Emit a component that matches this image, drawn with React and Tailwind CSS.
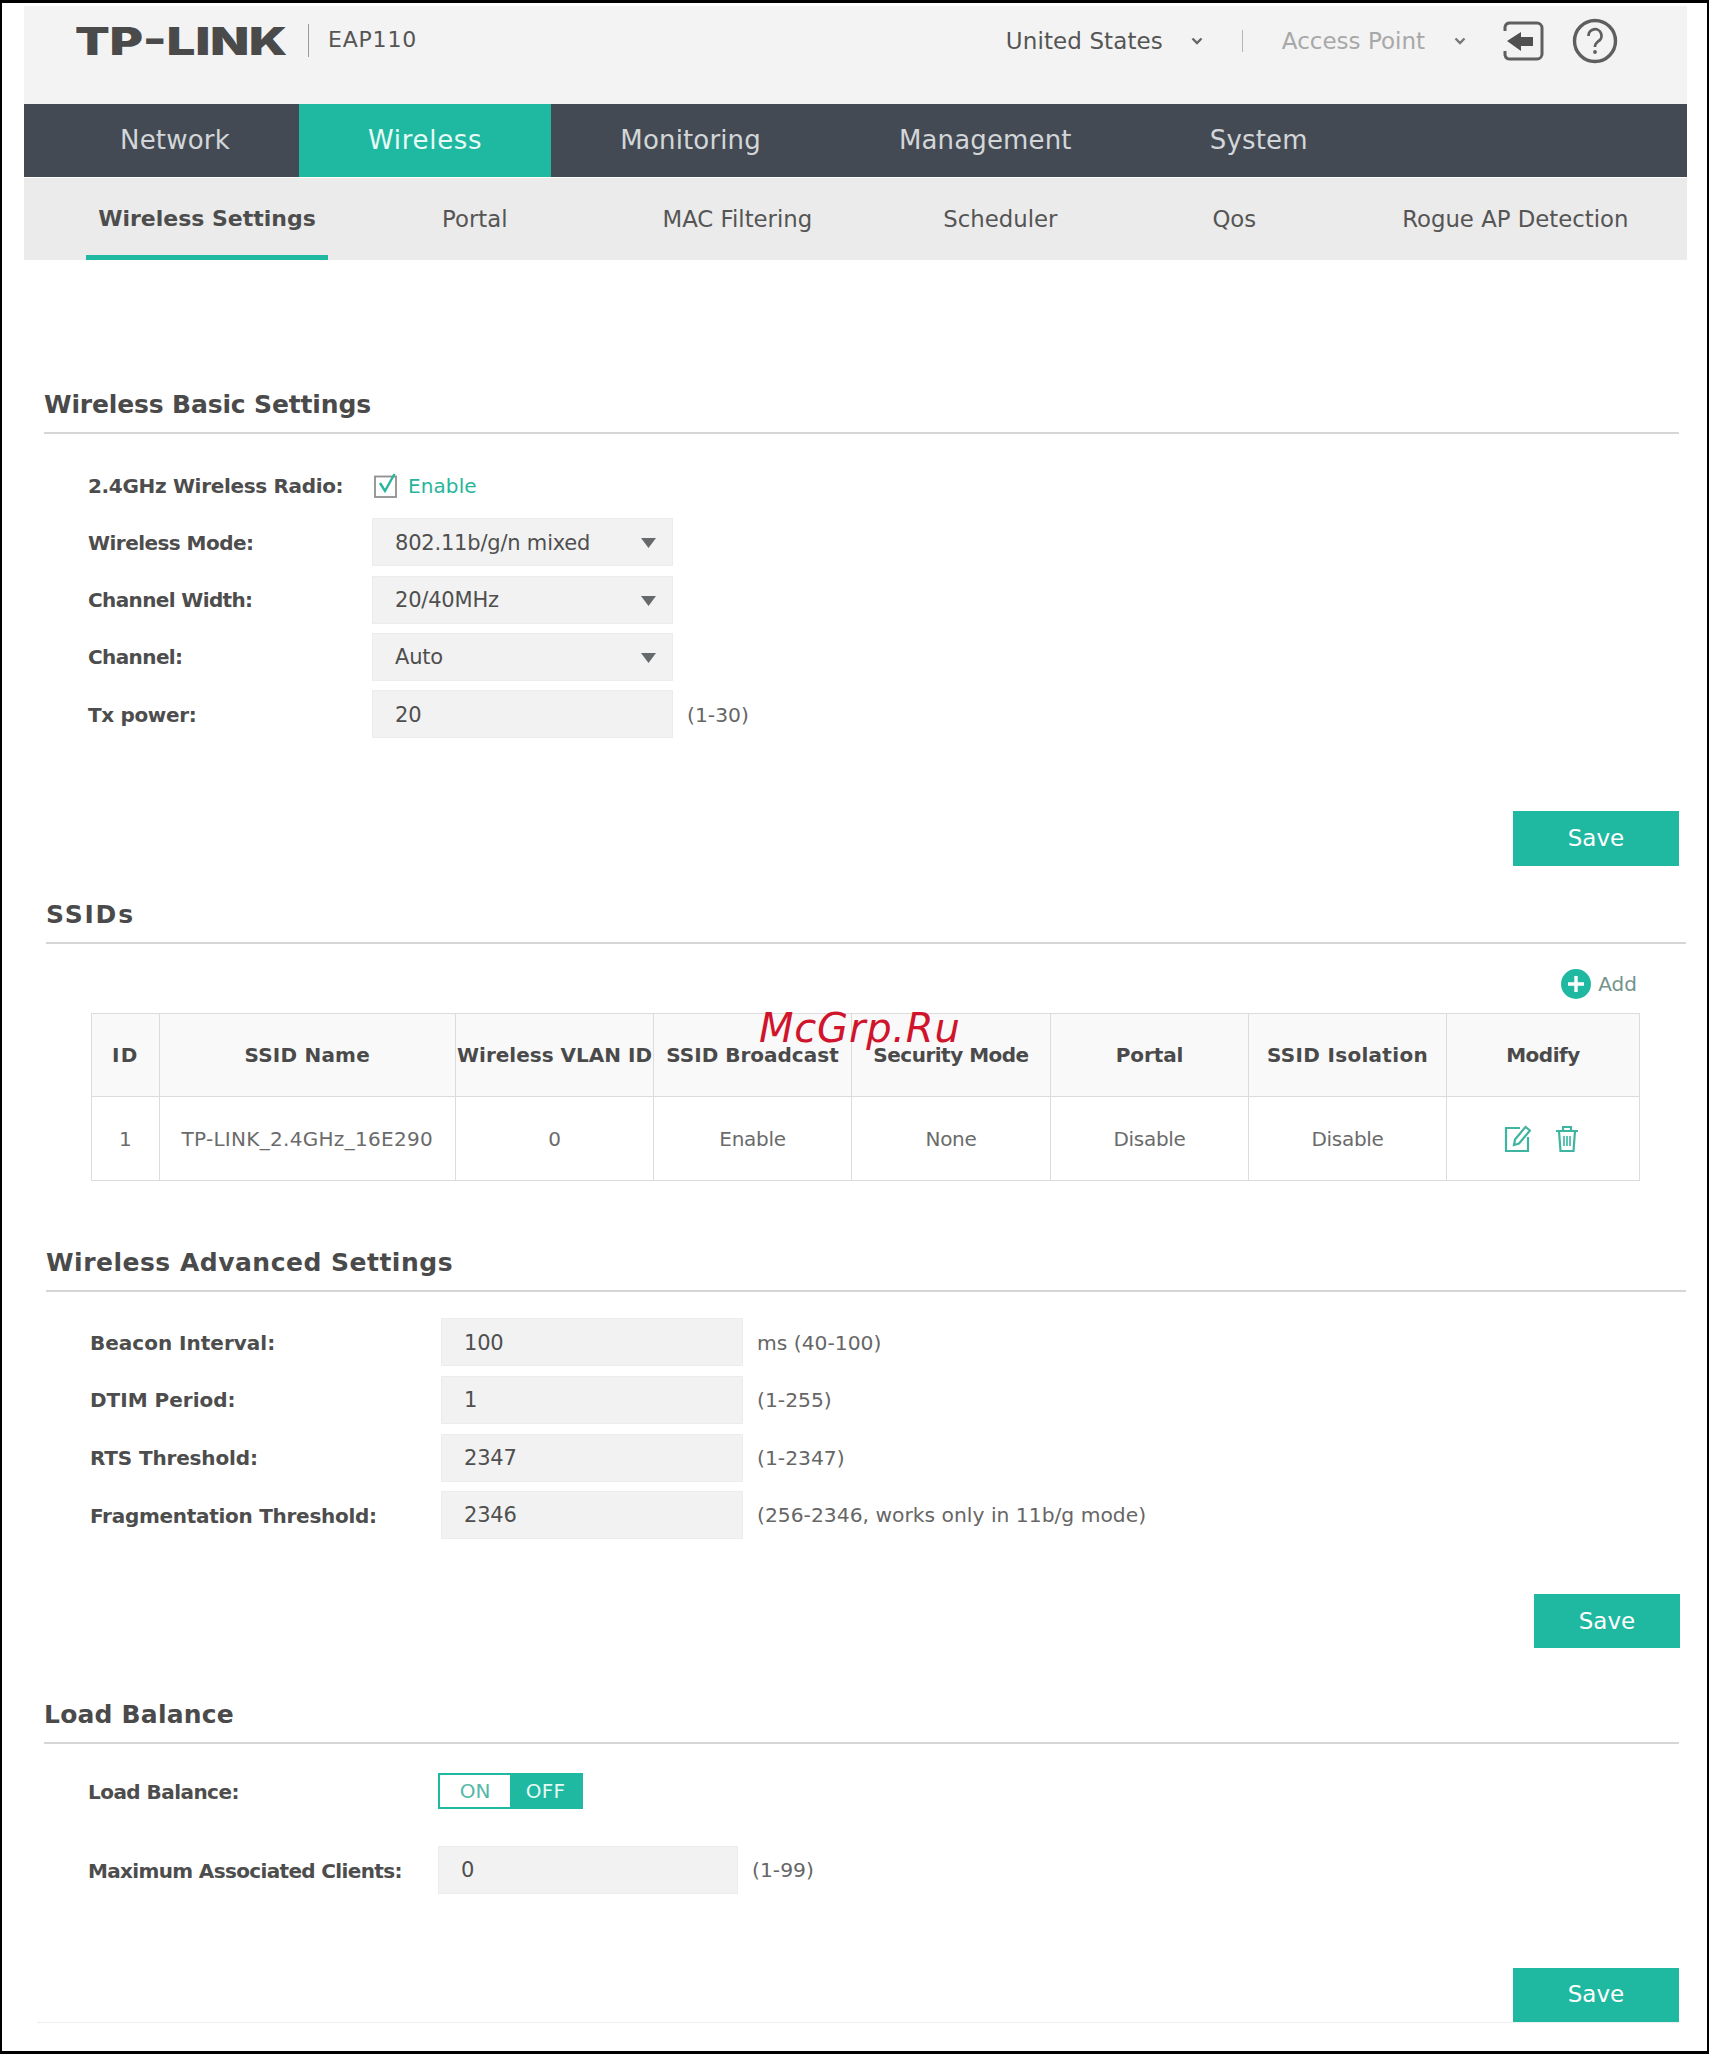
import React from "react";

const Chevron = ({ className }) => (
  <svg className={className} width="12" height="8" viewBox="0 0 12 8" fill="none" stroke="currentColor" strokeWidth="2.4">
    <path d="M1.5 1.5 L6 6 L10.5 1.5" />
  </svg>
);

const Arrow = () => (
  <svg className="absolute right-[16px] top-[19px]" width="15" height="10" viewBox="0 0 15 10">
    <polygon points="0,0 15,0 7.5,10" fill="#666a6d" />
  </svg>
);

const Heading = ({ className, tracking, children }) => (
  <div className={`h-[50px] pb-[8px] border-b-2 border-[#d6d6d6] flex items-center ${className}`}>
    <h2 className={`pt-[1px] text-[25px] leading-[40px] font-bold text-[#4a4a4a] ${tracking}`}>{children}</h2>
  </div>
);

const Field = ({ value, select, className }) => (
  <div className={`relative h-[48px] bg-[#f2f2f2] border border-[#ececec] flex items-center pl-[22px] pt-[2px] text-[21px] text-[#4f4f4f] tracking-[-0.2px] ${className}`}>
    {value}
    {select && <Arrow />}
  </div>
);

const Label = ({ className, children }) => (
  <div className={`pt-[1px] text-[20px] font-bold text-[#4d4d4d] whitespace-nowrap ${className}`}>{children}</div>
);

const Hint = ({ children }) => <div className="ml-[14px] pt-[1px] text-[20.3px] text-[#666666]">{children}</div>;

const SaveButton = ({ className }) => (
  <button className={`flex items-center justify-center bg-[#1fb8a0] text-white text-[23px] ${className}`}>Save</button>
);

const mainNav = [
  { t: "Network", c: "ml-[27px] tracking-[0.2px]" },
  { t: "Wireless", c: "bg-[#1fb8a0] text-[#e6fbf6] tracking-[0.7px]" },
  { t: "Monitoring", c: "tracking-[0.15px]" },
  { t: "Management", c: "tracking-[0.15px]" },
  { t: "System", c: "tracking-[0.2px]" },
];

const subNav = [
  { t: "Portal", c: "ml-[114px]" },
  { t: "MAC Filtering", c: "ml-[155px]" },
  { t: "Scheduler", c: "ml-[131px]" },
  { t: "Qos", c: "ml-[155px]" },
  { t: "Rogue AP Detection", c: "ml-[146px]" },
];

const basic = [
  ["Wireless Mode:", "802.11b/g/n mixed", true, null, "tracking-[-0.55px]"],
  ["Channel Width:", "20/40MHz", true, null, "tracking-[-0.63px]"],
  ["Channel:", "Auto", true, null, "tracking-[-0.6px]"],
  ["Tx power:", "20", false, "(1-30)", "tracking-[-0.35px]"],
];

const advanced = [
  ["Beacon Interval:", "100", "ms (40-100)", "tracking-[0px]"],
  ["DTIM Period:", "1", "(1-255)", "tracking-[0px]"],
  ["RTS Threshold:", "2347", "(1-2347)", "tracking-[-0.15px]"],
  ["Fragmentation Threshold:", "2346", "(256-2346, works only in 11b/g mode)", "tracking-[-0.28px]"],
];

const cols = [
  ["ID", "tracking-[1.2px]"],
  ["SSID Name", "tracking-[0.2px]"],
  ["Wireless VLAN ID", "tracking-[0px]"],
  ["SSID Broadcast", "tracking-[0px]"],
  ["Security Mode", "tracking-[-0.5px]"],
  ["Portal", "tracking-[-0.1px]"],
  ["SSID Isolation", "tracking-[0.3px]"],
  ["Modify", "tracking-[-0.5px]"],
];
const cells = [
  ["1", "tracking-[-0.3px]"],
  ["TP-LINK_2.4GHz_16E290", "tracking-[0.3px]"],
  ["0", "tracking-[-0.3px]"],
  ["Enable", "tracking-[-0.3px]"],
  ["None", "tracking-[-0.3px]"],
  ["Disable", "tracking-[-0.3px]"],
  ["Disable", "tracking-[-0.3px]"],
];
const gridCols = "grid grid-cols-[67.5px_296.5px_198px_198px_199px_198px_198px_193px]";

export default function App() {
  return (
    <div className="relative w-[1709px] h-[2054px] overflow-hidden bg-white border-x-2 border-y-[3px] border-black pt-[3px] font-['DejaVu_Sans',sans-serif]">
      {/* header */}
      <div className="ml-[22px] mr-[20px]">
        <header className="h-[98px] bg-[#f3f3f3] flex items-start relative">
          <div className="ml-[51px] mt-[15px] w-[211px] h-[40px] flex items-center whitespace-nowrap origin-left scale-x-[1.33] text-[38px] font-black text-[#4a4a4a] font-['Inter',sans-serif]">TP-LINK</div>
          <div className="ml-[22px] mt-[18px] h-[33px] w-px bg-[#9a9a9a]" />
          <div className="ml-[19px] mt-[20px] text-[22px] leading-[28px] text-[#555555] tracking-[0.8px]">EAP110</div>
          <div className="ml-auto flex items-center h-[70px] mt-0">
            <span className="text-[23px] text-[#555555] tracking-[0.1px]">United States</span>
            <Chevron className="ml-[28px] text-[#666666]" />
            <div className="ml-[39px] h-[22px] w-px bg-[#b5b5b5]" />
            <span className="ml-[39px] text-[23px] text-[#a8a8a8]">Access Point</span>
            <Chevron className="ml-[29px] text-[#777777]" />
            <svg className="ml-[36px]" width="42" height="42" viewBox="0 0 42 42" fill="none">
              <path d="M3 11 V7 A5 5 0 0 1 8 3 H35 A5 5 0 0 1 40 8 V34 A5 5 0 0 1 35 39 H8 A5 5 0 0 1 3 35 V31" stroke="#5f5f5f" strokeWidth="3" />
              <polygon points="5,21 19,12 19,17 31,17 31,26 19,26 19,31" fill="#505050" />
            </svg>
            <svg className="ml-[28px] mr-[69px]" width="46" height="46" viewBox="0 0 46 46" fill="none">
              <circle cx="23" cy="23" r="20.5" stroke="#5f5f5f" strokeWidth="3.4" />
              <path d="M16.5 18 A6.5 6.5 0 1 1 26 23.5 C24 25 23 26 23 29" stroke="#5f5f5f" strokeWidth="2.8" />
              <circle cx="23" cy="34" r="1.9" fill="#5f5f5f" />
            </svg>
          </div>
        </header>

        <nav className="h-[73px] bg-[#434a54] flex text-[26px] text-[#d3d6d8]">
          {mainNav.map((n) => (
            <div key={n.t} className={`h-full flex items-center px-[69px] ${n.c}`}>{n.t}</div>
          ))}
        </nav>

        <div className="mt-px h-[82px] bg-[#ebebeb] flex text-[22.8px] text-[#555555] items-start">
          <div className="ml-[62px] h-[82px] w-[242px] border-b-[5px] border-[#1fb8a0] flex items-center justify-center text-[22px] font-bold text-[#4d4d4d] pt-[3px]">Wireless Settings</div>
          {subNav.map((s) => (
            <div key={s.t} className={`h-[82px] pt-[1px] flex items-center ${s.c}`}>{s.t}</div>
          ))}
        </div>
      </div>

      {/* Wireless Basic Settings */}
      <Heading className="ml-[42px] mr-[28px] mt-[124px]" tracking="tracking-[-0.15px]">Wireless Basic Settings</Heading>
      <div className="ml-[86px] mt-[27px] flex flex-col gap-[9.33px]">
        <div className="h-[48px] flex items-center">
          <Label className="w-[284px] tracking-[-0.33px]">2.4GHz Wireless Radio:</Label>
          <svg className="ml-[2px]" width="25" height="25" viewBox="0 0 25 25" fill="none">
            <rect x="1" y="3.5" width="21" height="20.5" stroke="#8f8f8f" strokeWidth="1.8" />
            <path d="M6 10 L11 18 L20.5 1" stroke="#27b69c" strokeWidth="2.4" />
          </svg>
          <span className="ml-[9px] pt-[1px] text-[20px] tracking-[0.1px] text-[#27b69c]">Enable</span>
        </div>
        {basic.map(([l, v, sel, hint, tr]) => (
          <div key={l} className="h-[48px] flex items-center">
            <Label className={`w-[284px] ${tr}`}>{l}</Label>
            <Field value={v} select={sel} className="w-[301px]" />
            {hint && <Hint>{hint}</Hint>}
          </div>
        ))}
      </div>
      <div className="mt-[73px] flex justify-end mr-[28px]">
        <SaveButton className="w-[166px] h-[55px] pb-[2px]" />
      </div>

      {/* SSIDs */}
      <Heading className="ml-[44px] mr-[21px] mt-[28px]" tracking="tracking-[1.8px]">SSIDs</Heading>
      <div className="mt-[25px] h-[30px] flex justify-end items-center mr-[70px]">
        <svg width="30" height="30" viewBox="0 0 30 30">
          <circle cx="15" cy="15" r="15" fill="#1fb8a0" />
          <path d="M15 7 V23 M7 15 H23" stroke="#ffffff" strokeWidth="3.4" />
        </svg>
        <span className="ml-[7px] text-[20px] text-[#74938c]">Add</span>
      </div>
      <div className={`${gridCols} ml-[89px] mt-[14px] w-[1549px] border border-[#dcdcdc] border-r-0 text-[20px]`}>
        {cols.map(([c, tr]) => (
          <div key={c} className={`h-[83px] bg-[#f9f9f9] border-r border-b border-[#dcdcdc] flex items-center justify-center font-bold text-[#4a4a4a] whitespace-nowrap ${tr}`}>{c}</div>
        ))}
        {cells.map(([c, tr], i) => (
          <div key={i} className={`h-[83px] border-r border-[#dcdcdc] flex items-center justify-center text-[#6b6b6b] whitespace-nowrap ${tr}`}>{c}</div>
        ))}
        <div className="h-[83px] border-r border-[#dcdcdc] flex items-center justify-center gap-[24px] pr-[3px]">
          <svg width="27" height="27" viewBox="0 0 27 27" fill="none" stroke="#3db5a0" strokeWidth="2.2">
            <path d="M16 3 H2 V26 H24 V12" />
            <path d="M10 20 L11 14.5 L21.5 2 L26 5.5 L15 18.5 Z" />
          </svg>
          <svg width="24" height="27" viewBox="0 0 24 27" fill="none" stroke="#3db5a0" strokeWidth="2.2">
            <path d="M1 6 H23 M8 6 V2 H16 V6" />
            <path d="M4 6 L5.5 26 H18.5 L20 6" />
            <path d="M9 11 V21 M12 11 V21 M15 11 V21" strokeWidth="1.6" />
          </svg>
        </div>
      </div>

      {/* Advanced */}
      <Heading className="ml-[44px] mr-[21px] mt-[61px]" tracking="tracking-[0.5px]">Wireless Advanced Settings</Heading>
      <div className="ml-[88px] mt-[26px] flex flex-col gap-[9.6px]">
        {advanced.map(([l, v, hint, tr]) => (
          <div key={l} className="h-[48px] flex items-center">
            <Label className={`w-[351px] ${tr}`}>{l}</Label>
            <Field value={v} className="w-[302px]" />
            <Hint>{hint}</Hint>
          </div>
        ))}
      </div>
      <div className="mt-[55px] flex justify-end mr-[27px]">
        <SaveButton className="w-[146px] h-[54px]" />
      </div>

      {/* Load Balance */}
      <Heading className="ml-[42px] mr-[28px] mt-[46px]" tracking="tracking-[0.2px]">Load Balance</Heading>
      <div className="ml-[86px] mt-[29px] h-[36px] flex items-center">
        <Label className="w-[350px] tracking-[-0.55px]">Load Balance:</Label>
        <div className="w-[145px] h-[36px] flex border-2 border-[#1fb8a0] text-[20px]">
          <div className="w-[70px] flex items-center justify-center text-[#55b8a6] bg-white">ON</div>
          <div className="flex-1 flex items-center justify-center text-[#e6fbf6] bg-[#1fb8a0] tracking-[0.3px]">OFF</div>
        </div>
      </div>
      <div className="ml-[86px] mt-[37px] flex items-center">
        <Label className="w-[350px] tracking-[-0.65px]">Maximum Associated Clients:</Label>
        <Field value="0" className="w-[300px]" />
        <Hint>(1-99)</Hint>
      </div>
      <div className="mt-[74px] ml-[35px] mr-[28px] flex justify-end border-b border-[#eeeeee]">
        <SaveButton className="w-[166px] h-[54px] pb-[1px]" />
      </div>

      {/* watermark */}
      <div className="absolute left-[757px] top-[1000px] text-[40px] leading-[50px] italic tracking-[0.8px] text-[#d0142c]">McGrp.Ru</div>
    </div>
  );
}
